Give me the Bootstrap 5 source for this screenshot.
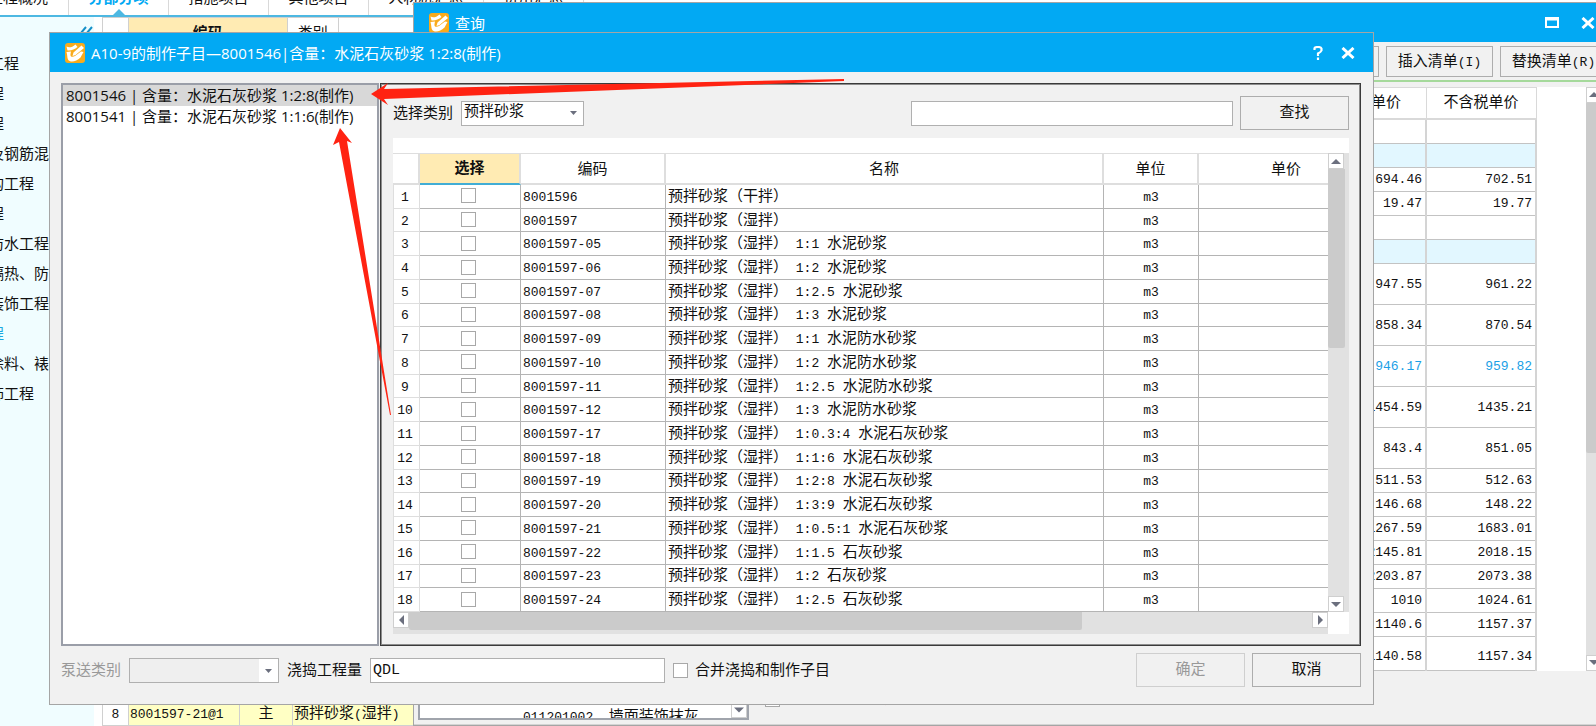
<!DOCTYPE html>
<html lang="zh-CN">
<head>
<meta charset="utf-8">
<meta name="viewport" content="width=device-width, initial-scale=1">
<title>查询</title>
<link rel="stylesheet" href="https://cdn.jsdelivr.net/npm/bootstrap@5.3.0/dist/css/bootstrap.min.css">
<style>
  :root { --win: #02a9f3; --face: #f1f1f1; --edge: #b4b4b4; --rule: #d9d9d9; }
  body { font: 15px/20px "Open Sans", "Noto Sans CJK SC", sans-serif; color: #111; background: #fff; height: 100vh; overflow: hidden; }
  .mono { font-family: "Liberation Mono", "Noto Sans CJK SC", monospace; font-size: 13px; }
  .song { font-family: "Liberation Mono", "Noto Sans CJK SC", monospace; }

  /* main window */
  .tabs { height: 17px; border-bottom: 2px solid #4db8e2; overflow: hidden; }
  .tabs a { margin-top: -13px; height: 28px; width: 100px; line-height: 20px; text-align: center; color: #111; text-decoration: none; border-right: 1px solid var(--rule); white-space: nowrap; position: relative; }
  .tabs a:first-child { width: 69px; text-align: right; padding-right: 20px; direction: rtl; }
  .tabs a.wide { width: 115px; }
  .tabs a.on { color: var(--win); font-weight: 700; }
  .tabs a.on::after { content: ""; position: absolute; left: 44px; bottom: 0; border: 6px solid transparent; border-top: 0; border-bottom-color: #4db8e2; }
  .side { width: 94px; background: #f0fdff; position: relative; overflow: hidden; padding-top: 31px; }
  .side li { height: 30px; line-height: 30px; margin-left: -56px; white-space: nowrap; }
  .side .fold { position: absolute; left: 79px; top: 9px; }
  .maintable { table-layout: fixed; border-collapse: collapse; }
  .maintable td, .maintable th { border: 1px solid #d0d0d0; font-weight: 400; padding: 0 1px; white-space: nowrap; overflow: hidden; }
  .maintable td { padding-top: 2px; }
  .maintable .yel { background: #ffffc4; }
  .hot { background: #ffebb3; font-weight: 700 !important; }

  /* windows */
  .win { position: absolute; background: var(--face); border: 1px solid #a5a5a5; }
  .query { left: 413px; right: -8px; top: 2px; bottom: 0; }
  .dialog { left: 49px; right: 222px; top: 32px; }
  .bar { height: 39px; background: var(--win); color: #fff; padding-left: 15px; }
  .bar button { border: 0; background: none; padding: 0; color: #fff; line-height: 0; }
  .caption { padding-left: 6px; }
  .btn-face { background: var(--face); border: 1px solid #adadad; border-radius: 0; color: #111; padding: 2px 0 0; font-size: 15px; line-height: 20px; }
  .btn-face:disabled { background: var(--face); border-color: #cfcfcf; color: #999; opacity: 1; }
  .tool { width: 107px; height: 31px; white-space: nowrap; }
  .act { width: 109px; height: 34px; }
  .field { border: 1px solid #b0b0b0; border-radius: 0; height: 25px; padding: 0 2px; background-color: #fff; color: #111; font-size: 15px; line-height: 20px; }
  select.field { appearance: none; background: #fff url("data:image/svg+xml,%3Csvg xmlns='http://www.w3.org/2000/svg' width='7' height='4'%3E%3Cpath d='M0 0h7L3.500 4z' fill='%236b6f7e'/%3E%3C/svg%3E") no-repeat right 6px center; }
  select.field:disabled { background-image: url("data:image/svg+xml,%3Csvg xmlns='http://www.w3.org/2000/svg' width='19' height='23'%3E%3Cpath d='M0 0h19v23H0z' fill='%23fff'/%3E%3Cpath d='M6 10h7L9.500 14z' fill='%236b6f7e'/%3E%3C/svg%3E"); background-position: right 0 center; background-color: #efefef; opacity: 1; }
  .caps { padding-top: 3px; }
  .tick { appearance: none; width: 15px; height: 15px; border: 1px solid #a8a8a8; background: #fff; margin: 0; display: block; flex: none; }

  /* scroll bars */
  .vbar { width: 17px; background: #e1e1e1; }
  .hbar { height: 22px; background: #e1e1e1; }
  .arrow { width: 16px; height: 16px; border: 1px solid #cfcfcf; background: #fff; padding: 0; line-height: 0; display: flex; align-items: center; justify-content: center; flex: none; }
  .thumb { background: #cbcbcb; border-radius: 0 0 2px 2px; }

  /* price grid */
  .price { table-layout: fixed; border-collapse: collapse; width: 100%; background: #fff; }
  .price th { font-weight: 400; text-align: center; height: 32px; border: 1px solid var(--rule); border-bottom-width: 2px; white-space: nowrap; padding: 2px 0 0; }
  .price td { border: 1px solid #c3c3c3; border-right: 2px solid #d4d4d4; text-align: right; padding: 2px 3px 0; height: 24px; line-height: 18px; }
  .price .tall td { height: 41px; }
  .price .last td { height: 34px; padding-top: 8px; }
  .price .group td { background: #e2f7ff; }
  .price .cur td { color: #1b9fe6; }

  /* dialog */
  .picklist { width: 318px; border: 2px solid #9a9ea8; background: #fff; }
  .picklist li { height: 21px; line-height: 21px; padding-left: 3px; white-space: nowrap; }
  .picklist .on { background: #d8d8d8; }
  .pane { border: 1px solid #3a3a3a; outline: 1px solid #8d8d8d; outline-offset: -2px; }
  .items { table-layout: fixed; border-collapse: separate; border-spacing: 0; width: 982px; height: 459px; }
  .items th { font-weight: 400; text-align: center; border: solid #dedede; border-width: 1px 2px 2px 0; height: 32px; padding: 4px 0 0; }
  .items th.hot { border-bottom-color: #41add5; padding-top: 2px; }
  .items td { border: solid var(--edge); border-width: 0 1px 1px 0; padding: 3px 2px 0; line-height: 18px; white-space: nowrap; }
  .items td:first-child { text-align: center; border-color: #dedede; border-left: 1px solid #dedede; padding: 3px 3px 0 0; }
  .items td.pick { padding: 0 3px 1px 0; }
  .arrows { position: absolute; left: 0; top: 0; pointer-events: none; }
</style>
</head>
<body class="position-relative">
<svg width="0" height="0" class="position-absolute">
  <symbol id="logo" viewBox="0 0 20 20">
    <rect width="20" height="20" rx="3" fill="#f9ab1c"/>
    <path d="M1.500 3.500C4 5 7 4.500 10.500 1.500l2 2.500C9.500 6.500 6 8 2.500 7.500zM8.500 9.500l8-7 2.500 2.500-8.500 7-3 1zM1.500 9L6 8.500 5.500 11C5 14 7.500 14.500 10 13l6-4.500 2.500.5-3 5.500C11 19 5 20 3 16.500c-1-2-.5-4.500-1.500-7.500z" fill="#fff"/>
  </symbol>
  <symbol id="cross" viewBox="0 0 14 12"><path d="M1.500 1l11 10M12.500 1l-11 10" stroke="#fff" stroke-width="3" fill="none"/></symbol>
  <symbol id="up" viewBox="0 0 10 5"><path d="M0 5L5 0l5 5z" fill="#6b6f7e"/></symbol>
  <symbol id="down" viewBox="0 0 10 5"><path d="M0 0l5 5 5-5z" fill="#6b6f7e"/></symbol>
  <symbol id="left" viewBox="0 0 5 10"><path d="M5 0L0 5l5 5z" fill="#6b6f7e"/></symbol>
  <symbol id="right" viewBox="0 0 5 10"><path d="M0 0l5 5-5 5z" fill="#6b6f7e"/></symbol>
</svg>

<main class="d-flex flex-column h-100">
  <nav class="tabs d-flex flex-shrink-0">
    <a href="#">工程概况</a><a href="#" class="on">分部分项</a><a href="#">措施项目</a><a href="#">其他项目</a><a href="#" class="wide">人材机汇总</a><a href="#">费用汇总</a>
  </nav>
  <div class="d-flex flex-fill overflow-hidden">
    <aside class="side flex-shrink-0">
      <svg class="fold" width="14" height="16" fill="none" stroke="#1590c8" stroke-width="2"><path d="M7 1L1 8l6 7M13 1L7 8l6 7"/></svg>
      <ul class="list-unstyled m-0">
        <li>土石方工程</li><li>桩基工程</li><li>砌筑工程</li><li>混凝土及钢筋混凝土工程</li><li>金属结构工程</li><li>门窗工程</li><li>屋面及防水工程</li><li>保温、隔热、防腐工程</li><li>楼地面装饰工程</li><li style="color:#1ba8e0">天棚工程</li><li>油漆、涂料、裱糊工程</li><li>其他装饰工程</li>
      </ul>
    </aside>
    <section class="d-flex flex-column justify-content-between ps-2">
      <table class="maintable">
        <colgroup><col style="width:26px"><col style="width:158px"><col style="width:51px"><col style="width:76px"></colgroup>
        <tr><th style="height:28px"></th><th class="hot text-center">编码</th><th class="text-center">类别</th><th></th></tr>
      </table>
      <table class="maintable song">
        <colgroup><col style="width:26px"><col style="width:111px"><col style="width:53px"><col style="width:122px"></colgroup>
        <tr><td class="text-center mono" style="height:23px">8</td><td class="yel mono">8001597-21@1</td><td class="yel text-center">主</td><td class="yel">预拌砂浆<span class="mono">(</span>湿拌<span class="mono">)</span></td></tr>
      </table>
    </section>
  </div>
</main>

<section class="win query d-flex flex-column">
  <header class="bar d-flex align-items-center flex-shrink-0 pe-2">
    <svg width="20" height="20"><use href="#logo"/></svg><span class="caption flex-fill">查询</span>
    <button aria-label="最大化"><svg width="14" height="11"><path d="M1 1h12v9H1zM1 2.500h12" fill="none" stroke="#fff" stroke-width="2"/></svg></button>
    <button style="margin-left:22px" aria-label="关闭"><svg width="14" height="12"><use href="#cross"/></svg></button>
  </header>
  <div class="d-flex justify-content-end pt-1 song" style="margin-right:-4px;gap:7px">
    <button class="btn btn-face tool">查询</button>
    <button class="btn btn-face tool">插入清单<span class="mono">(I)</span></button>
    <button class="btn btn-face tool">替换清单<span class="mono">(R)</span></button>
  </div>
  <div style="height:2px;background:#a5d99b;margin:3px 0 5px"></div>
  <div class="d-flex bg-white">
    <table class="price mono flex-fill">
      <colgroup><col><col style="width:110px"><col style="width:110px"></colgroup>
      <thead class="song" style="font-size:15px"><tr><th></th><th>含税单价</th><th>不含税单价</th></tr></thead>
      <tbody id="prices"></tbody>
    </table>
    <div class="flex-shrink-0" style="width:49px"></div>
    <div class="vbar flex-shrink-0 d-flex flex-column">
      <button class="arrow" aria-label="向上"><svg width="10" height="5"><use href="#up"/></svg></button>
      <div class="thumb" style="height:60%"></div>
      <button class="arrow mt-auto" aria-label="向下"><svg width="10" height="5"><use href="#down"/></svg></button>
    </div>
  </div>
  <div class="d-flex align-items-end mt-auto ps-1 pb-1" style="height:56px;border-bottom:1px solid #d4d4d4">
    <div class="bg-white d-flex align-items-end justify-content-end song overflow-hidden" style="width:331px;height:46px;border:2px solid #a0a4ac">
      <span class="flex-fill" style="height:10px;padding-left:103px;white-space:pre"><span class="mono">011201002  </span>墙面装饰抹灰</span>
      <button class="arrow" aria-label="展开"><svg width="10" height="6"><use href="#down"/></svg></button>
    </div>
    <label class="d-flex align-items-center gap-2 ps-3 song align-self-start" style="margin-top:19px"><input type="checkbox" class="tick">插入子目时自动带出工程量</label>
  </div>
</section>

<section class="win dialog">
  <header class="bar d-flex align-items-center">
    <svg width="20" height="20"><use href="#logo"/></svg><span class="caption flex-fill">A10-9的制作子目—8001546|含量：水泥石灰砂浆 1:2:8(制作)</span>
    <button aria-label="帮助"><svg width="10" height="14"><path d="M1.500 4V2.200Q2 1 5 1t3.500 1.500v2Q8 6 5 7.500V10M5 11.500V14" fill="none" stroke="#fff" stroke-width="2.200"/></svg></button>
    <button style="margin:0 18px" aria-label="关闭"><svg width="14" height="12"><use href="#cross"/></svg></button>
  </header>
  <div class="d-flex" style="padding:11px 12px 0 11px;gap:1px">
    <ul class="picklist list-unstyled m-0 flex-shrink-0">
      <li class="on">8001546 | 含量：水泥石灰砂浆 1:2:8(制作)</li>
      <li>8001541 | 含量：水泥石灰砂浆 1:1:6(制作)</li>
    </ul>
    <div class="pane flex-fill overflow-hidden song" style="padding:12px 11px 11px 12px">
      <div class="d-flex align-items-center">
        <label for="kind" class="caps">选择类别</label>
        <select id="kind" class="field song ms-2" style="width:123px"><option>预拌砂浆</option></select>
        <input class="field ms-auto" aria-label="关键字" style="width:322px">
        <button class="btn btn-face act" style="margin-left:7px">查找</button>
      </div>
      <div class="bg-white" style="margin-top:8px;padding-top:15px">
        <div class="d-flex">
          <div class="flex-fill overflow-hidden" style="width:0">
            <table class="items">
              <colgroup><col style="width:27px"><col style="width:101px"><col style="width:145px"><col style="width:438px"><col style="width:95px"><col></colgroup>
              <thead><tr><th></th><th class="hot">选择</th><th>编码</th><th>名称</th><th>单位</th><th>单价</th></tr></thead>
              <tbody id="rows"></tbody>
            </table>
          </div>
          <div class="vbar d-flex flex-column" style="width:21px">
            <button class="arrow" aria-label="向上"><svg width="10" height="5"><use href="#up"/></svg></button>
            <div class="thumb" style="width:17px;height:39%"></div>
            <button class="arrow mt-auto" aria-label="向下"><svg width="10" height="5"><use href="#down"/></svg></button>
          </div>
        </div>
        <div class="d-flex" style="padding-right:21px">
          <div class="hbar d-flex flex-fill">
            <button class="arrow" aria-label="向左"><svg width="5" height="10"><use href="#left"/></svg></button>
            <div class="thumb" style="width:72%;height:18px"></div>
            <button class="arrow ms-auto" aria-label="向右"><svg width="5" height="10"><use href="#right"/></svg></button>
          </div>
        </div>
      </div>
    </div>
  </div>
  <div class="d-flex align-items-center song" style="padding:7px 12px 17px 11px">
    <label for="pump" class="caps" style="color:#999">泵送类别</label>
    <select id="pump" class="field ms-2" style="width:150px" disabled></select>
    <label for="qty" class="ms-2 caps">浇捣工程量</label>
    <input id="qty" class="field mono ms-2" style="width:295px" value="QDL">
    <label class="d-flex align-items-center ms-2" style="gap:7px"><input type="checkbox" class="tick"><span class="caps">合并浇捣和制作子目</span></label>
    <button class="btn btn-face act ms-auto" disabled>确定</button>
    <button class="btn btn-face act" style="margin-left:7px">取消</button>
  </div>
</section>

<svg class="arrows" width="860" height="430" fill="#ff2312">
  <path d="M371 94L388 83l-4 6L844 79v2L384 99l4 6z"/>
  <path d="M340 128l12 15-5-2 44 274h-1L339 142l-6 3z"/>
</svg>

<script>
  const rows = [
    ["8001596", "干拌"], ["8001597", "湿拌"],
    ["8001597-05", "湿拌", "1:1", "水泥砂浆"], ["8001597-06", "湿拌", "1:2", "水泥砂浆"],
    ["8001597-07", "湿拌", "1:2.5", "水泥砂浆"], ["8001597-08", "湿拌", "1:3", "水泥砂浆"],
    ["8001597-09", "湿拌", "1:1", "水泥防水砂浆"], ["8001597-10", "湿拌", "1:2", "水泥防水砂浆"],
    ["8001597-11", "湿拌", "1:2.5", "水泥防水砂浆"], ["8001597-12", "湿拌", "1:3", "水泥防水砂浆"],
    ["8001597-17", "湿拌", "1:0.3:4", "水泥石灰砂浆"], ["8001597-18", "湿拌", "1:1:6", "水泥石灰砂浆"],
    ["8001597-19", "湿拌", "1:2:8", "水泥石灰砂浆"], ["8001597-20", "湿拌", "1:3:9", "水泥石灰砂浆"],
    ["8001597-21", "湿拌", "1:0.5:1", "水泥石灰砂浆"], ["8001597-22", "湿拌", "1:1.5", "石灰砂浆"],
    ["8001597-23", "湿拌", "1:2", "石灰砂浆"], ["8001597-24", "湿拌", "1:2.5", "石灰砂浆"]
  ];
  document.getElementById("rows").innerHTML = rows.map(([code, mix, ratio, kind], i) =>
    `<tr><td class="mono">${i + 1}</td><td class="pick"><input type="checkbox" class="tick mx-auto" aria-label="选择 ${code}"></td>` +
    `<td class="mono">${code}</td><td>预拌砂浆（${mix}）${ratio ? `<span class="mono"> ${ratio} </span>${kind}` : ""}</td>` +
    `<td class="mono text-center">m3</td><td></td></tr>`).join("");

  const prices = [
    ["", "", ""], ["group", "", ""], ["", "694.46", "702.51"], ["", "19.47", "19.77"], ["", "", ""], ["group", "", ""],
    ["tall", "947.55", "961.22"], ["tall", "858.34", "870.54"], ["tall cur", "946.17", "959.82"],
    ["tall", "1454.59", "1435.21"], ["tall", "843.4", "851.05"],
    ["", "511.53", "512.63"], ["", "146.68", "148.22"], ["", "1267.59", "1683.01"], ["", "2145.81", "2018.15"],
    ["", "2203.87", "2073.38"], ["", "1010", "1024.61"], ["", "1140.6", "1157.37"], ["last", "1140.58", "1157.34"]
  ];
  document.getElementById("prices").innerHTML = prices.map(([cls, a, b]) =>
    `<tr class="${cls}"><td></td><td>${a}</td><td>${b}</td></tr>`).join("");
</script>
<script src="https://cdn.jsdelivr.net/npm/bootstrap@5.3.0/dist/js/bootstrap.bundle.min.js"></script>
</body>
</html>
